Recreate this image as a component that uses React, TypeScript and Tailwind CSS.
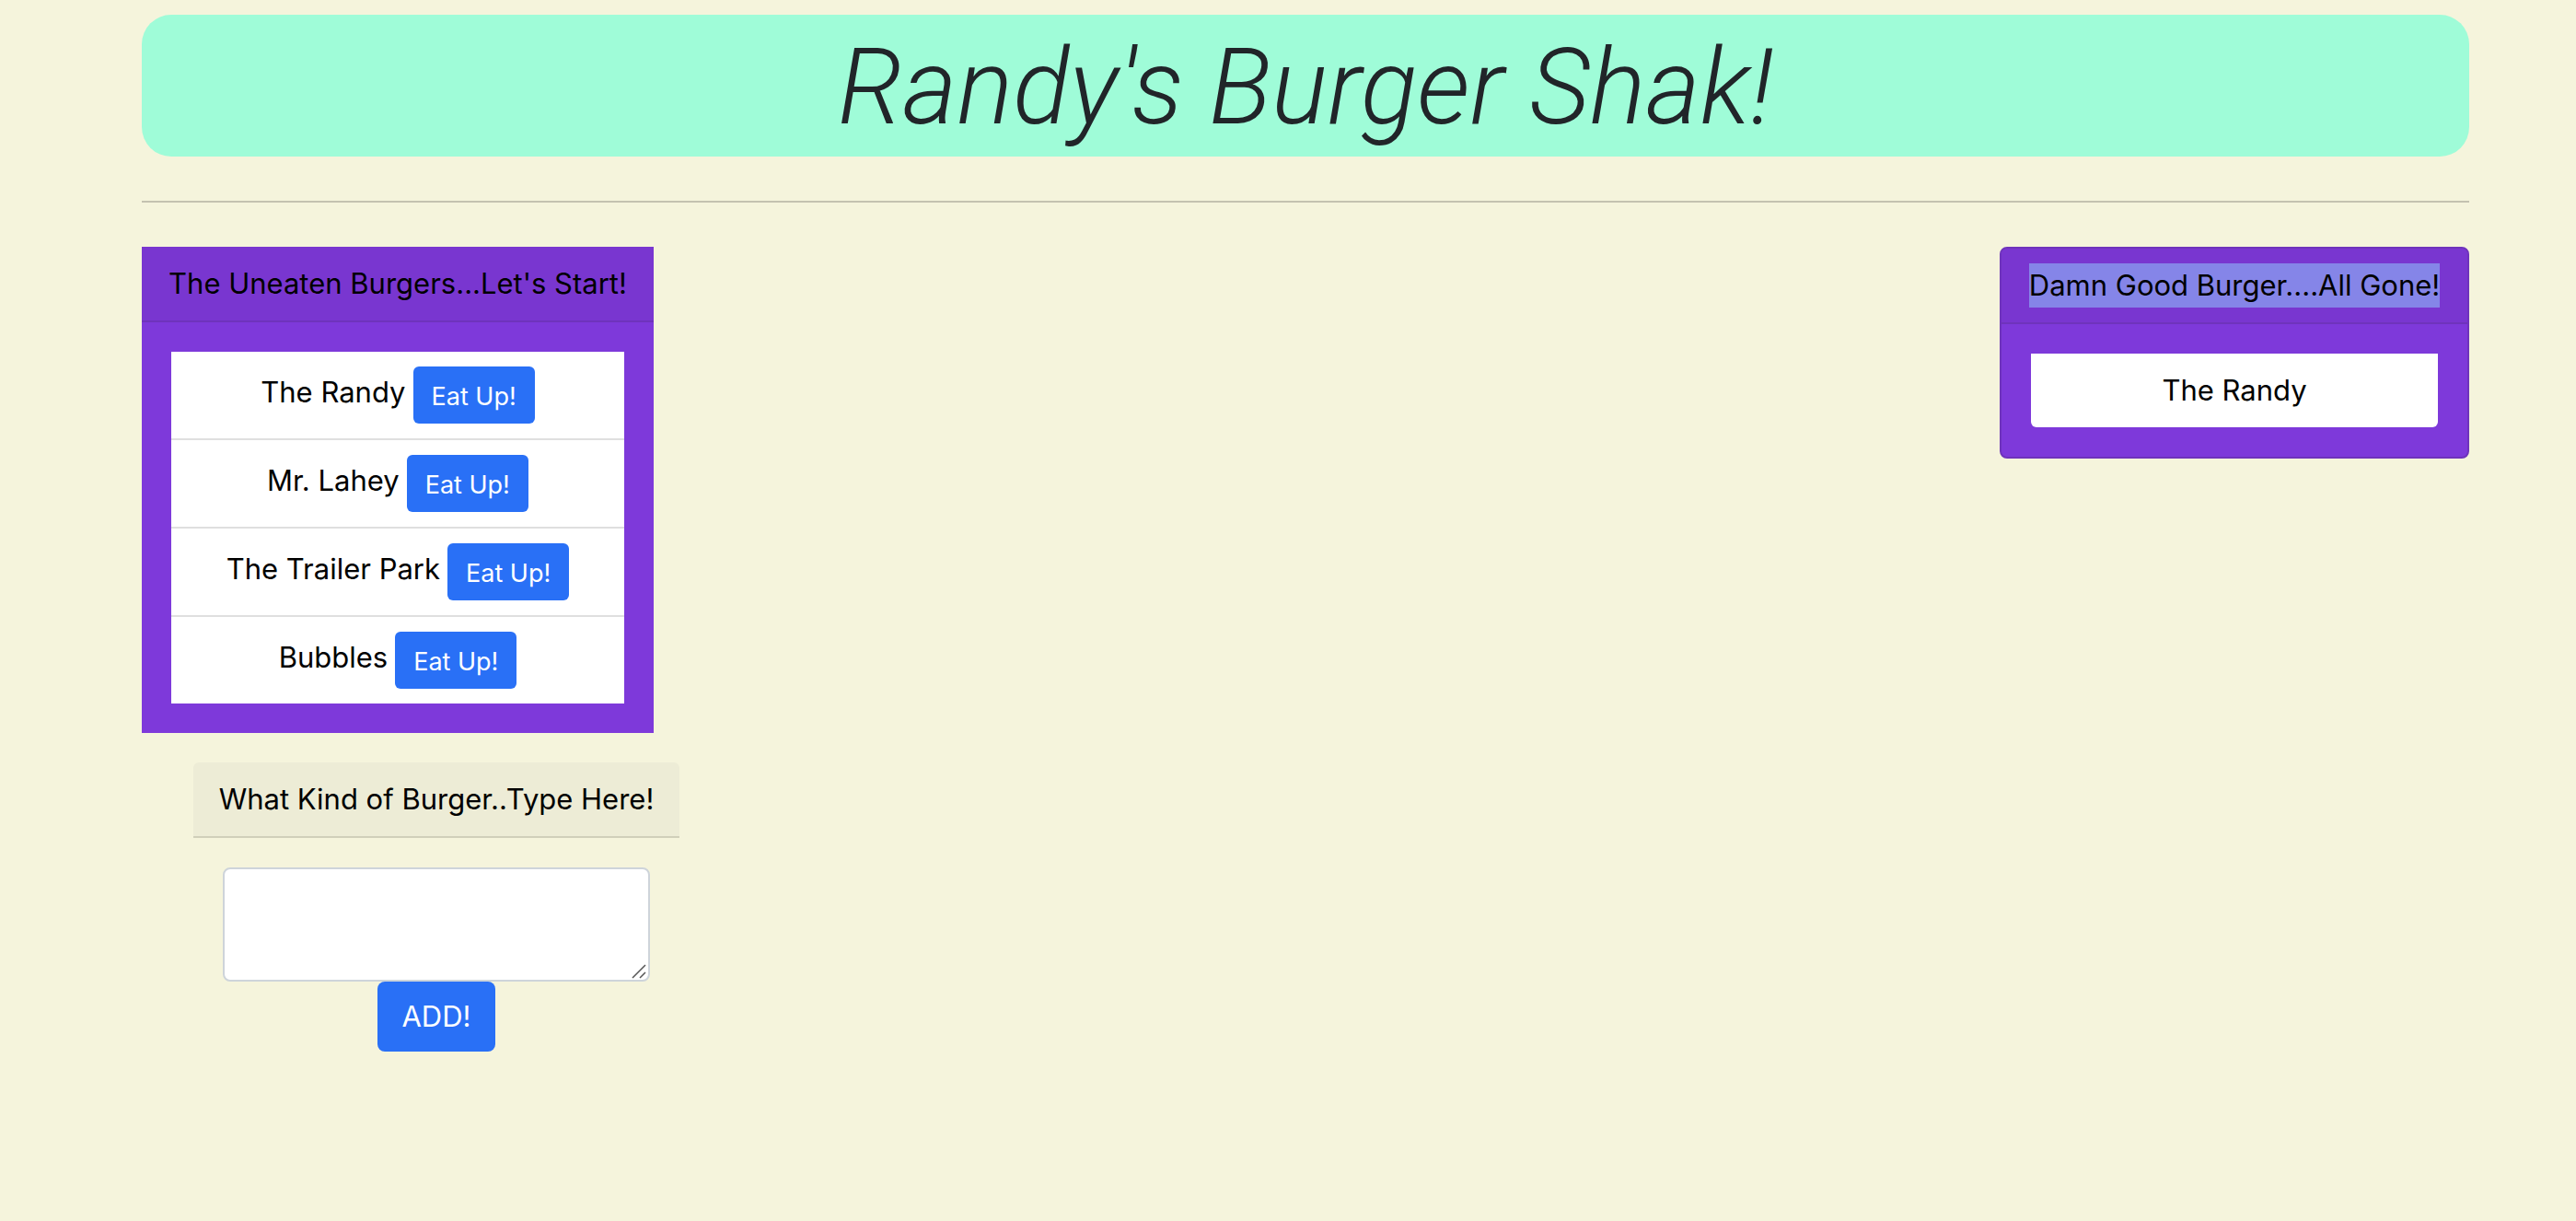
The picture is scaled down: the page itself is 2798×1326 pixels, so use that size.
const uneaten = ["The Randy", "Mr. Lahey", "The Trailer Park", "Bubbles"];
const eaten = ["The Randy"];

export default function App() {
  return (
    <div className="min-h-screen bg-[#f5f4dc] pt-4 pr-[116px] pb-16 pl-[154px] font-['Inter',sans-serif] text-[31px] leading-[48px] text-black">
      <header className="rounded-[32px] bg-[#9ffcd8]">
        <h1 className="pt-1 text-center font-['Roboto',sans-serif] text-[114px] leading-[150px] font-light text-[#212529] italic">
          Randy's Burger Shak!
        </h1>
      </header>
      <hr className="my-12 border-t-2 border-[#c4c2b0]" />
      <main className="flex items-start justify-between">
        <div>
          <section className="w-[556px] bg-[#7e39da] text-center">
            <h2 className="border-b-2 border-[#6f33bc] bg-[#7936d0] py-4 whitespace-nowrap">
              The Uneaten Burgers...Let's Start!
            </h2>
            <div className="p-8">
              <ul className="divide-y-2 divide-[#dfdfdf] bg-white">
                {uneaten.map((name) => (
                  <li key={name} className="flex items-start justify-center gap-2 py-4">
                    <span className="pt-1">{name}</span>
                    <button type="button" className="rounded-md bg-[#2970f6] px-5 pt-3 pb-2 text-[27px] leading-[42px] text-white">
                      Eat Up!
                    </button>
                  </li>
                ))}
              </ul>
            </div>
          </section>
          <form className="mt-8 ml-14 w-[528px] text-center" onSubmit={(e) => e.preventDefault()}>
            <label
              htmlFor="burger"
              className="block rounded-t-md border-b-2 border-[#d0cfba] bg-[#edecd6] py-4 whitespace-nowrap"
            >
              What Kind of Burger..Type Here!
            </label>
            <div className="flex flex-col items-center px-8 pt-8">
              <div className="relative w-full">
                <textarea
                  id="burger"
                  rows={2}
                  className="block h-[124px] w-full resize-none rounded-lg border-2 border-[#ced4da] bg-white px-6 py-3"
                />
                <svg
                  className="pointer-events-none absolute right-1 bottom-[3px] size-4"
                  viewBox="0 0 16 16"
                  fill="none"
                  stroke="#555"
                  strokeWidth="1.5"
                  aria-hidden="true"
                >
                  <path d="M1 15 15 1M9 15l6-6" />
                </svg>
              </div>
              <button type="submit" className="rounded-lg bg-[#2970f6] px-[26px] py-3.5 text-white">
                ADD!
              </button>
            </div>
          </form>
        </div>
        <section className="w-[510px] rounded-lg border-2 border-[#6f33bc] bg-[#7e39da] text-center">
          <h2 className="flex justify-center rounded-t-md border-b-2 border-[#6f33bc] bg-[#7936d0] py-4 whitespace-nowrap">
            <span className="bg-[#8585e8]">Damn Good Burger....All Gone!</span>
          </h2>
          <div className="p-8">
            <ul className="rounded-b-md bg-white">
              {eaten.map((name) => (
                <li key={name} className="py-4">
                  {name}
                </li>
              ))}
            </ul>
          </div>
        </section>
      </main>
    </div>
  );
}
